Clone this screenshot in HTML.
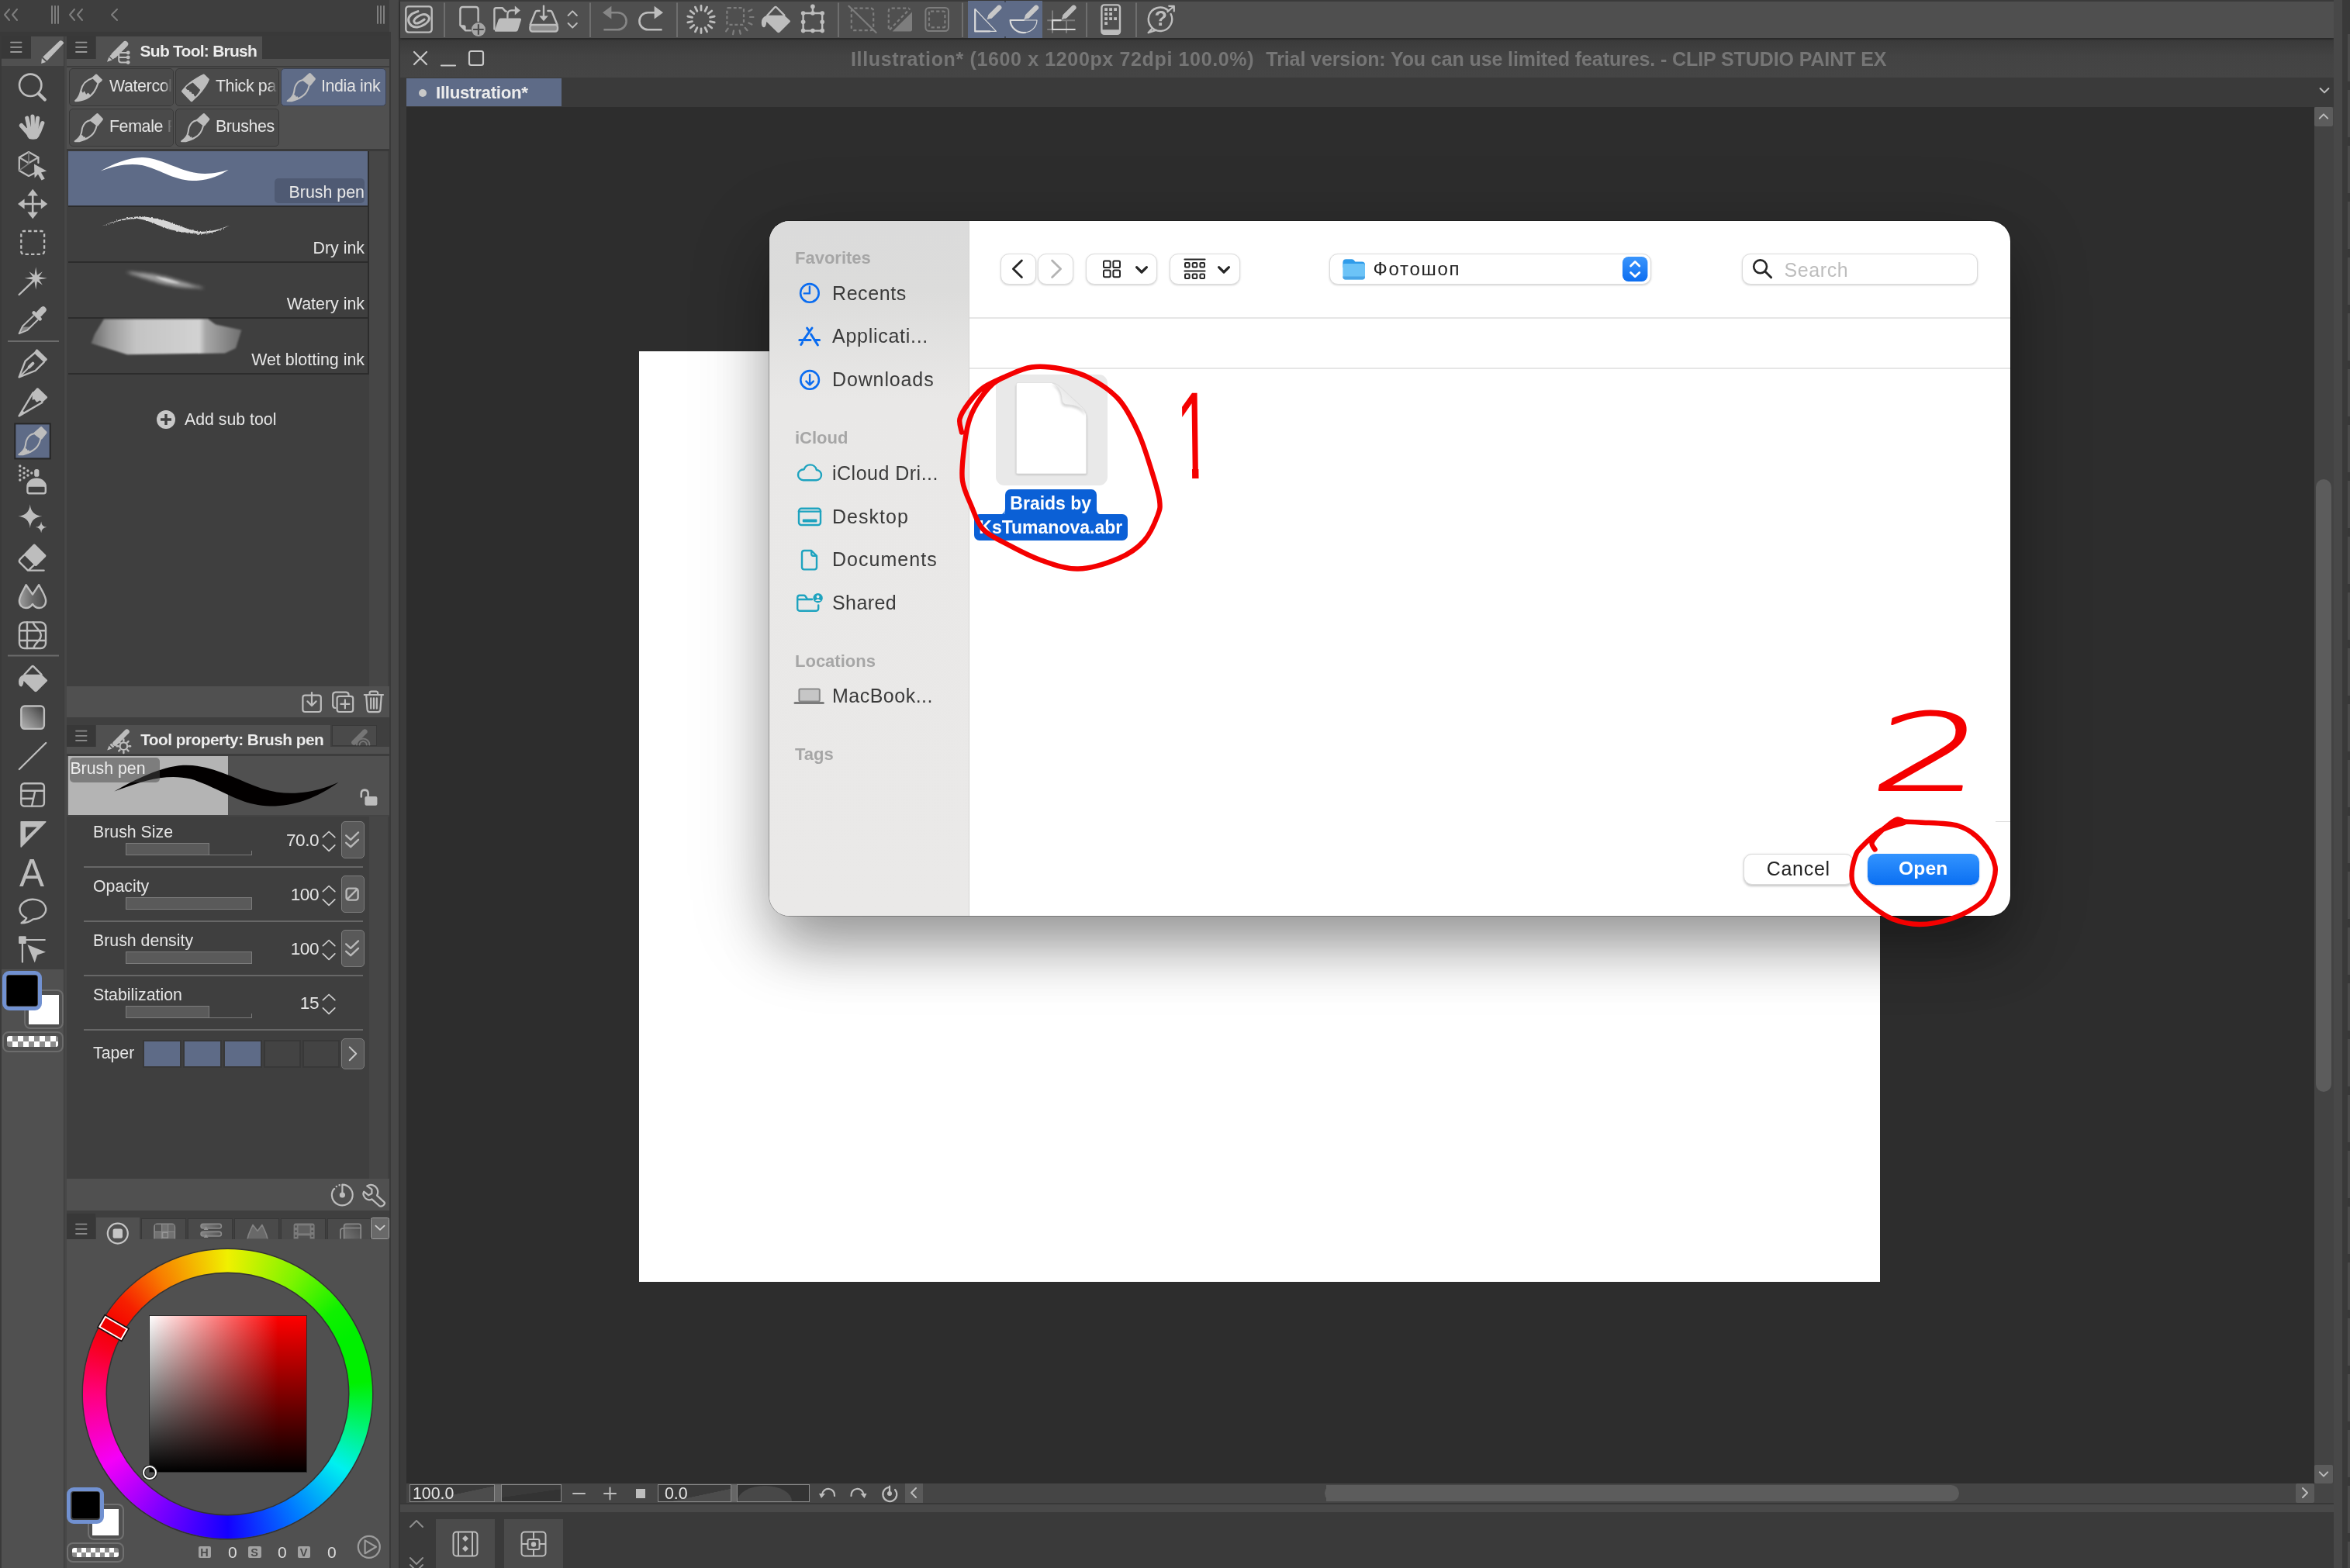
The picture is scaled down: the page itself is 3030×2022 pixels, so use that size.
<!DOCTYPE html>
<html lang="en"><head><meta charset="utf-8"><title>CLIP STUDIO PAINT - Open brush file</title>
<style>
*{box-sizing:border-box;margin:0;padding:0}
html,body{width:3030px;height:2022px;overflow:hidden}
body{position:relative;background:#474747;font-family:"Liberation Sans",sans-serif;color:#e2e2e2;-webkit-font-smoothing:antialiased}
.a{position:absolute}
.t{position:absolute;white-space:nowrap;line-height:1}
svg{position:absolute;overflow:visible}
.ic{fill:none;stroke:#bdbdbd;stroke-width:2.4;stroke-linecap:round;stroke-linejoin:round}
.icf{fill:#bdbdbd;stroke:none}
.dim{opacity:.42}
.lt{background:#505050}
.dk{background:#3f3f3f}
.sel{background:#5e6b87}
.gbtn{position:absolute;height:49px;background:#4a4a4a;border:1.6px solid #383838;border-radius:5px;overflow:hidden}
.gbtn.on{background:#5e6b87;border-color:#3b4254}
.gbtn .t{font-size:21.4px;letter-spacing:-.35px;color:#e4e4e4;left:50.9px;top:12.1px}
.gbtn i{position:absolute;right:0;top:0;width:13px;height:100%;background:linear-gradient(90deg,rgba(74,74,74,0),#4a4a4a 90%)}
.row{position:absolute;left:88px;width:386px;height:70px;background:#3f3f3f}
.row.sel{background:#5e6b87}
.rowsep{position:absolute;left:88px;width:388px;height:2px;background:#2c2c2c}
.rl{position:absolute;right:4px;bottom:6px;font-size:21.4px;color:#e8e8e8;white-space:nowrap;line-height:1}
.pl{position:absolute;left:120px;font-size:21.3px;color:#e6e6e6;white-space:nowrap;line-height:1}
.pv{position:absolute;font-size:22.6px;letter-spacing:-.5px;color:#e6e6e6;white-space:nowrap;line-height:1;text-align:right;width:80px;left:331px}
.sl{position:absolute;left:162px;width:163px;height:16px;border-bottom:1.5px solid #787878}
.sl:after{content:"";position:absolute;right:0;bottom:0;width:1.5px;height:5px;background:#787878}
.slf{position:absolute;left:0;top:0;height:16px;background:#5a5a5a;border:1.2px solid #7c7c7c;z-index:1}
.psep{position:absolute;left:108px;width:360px;height:2px;background:#676767}
.pbtn{position:absolute;left:440px;width:30px;background:#595959;border:1.3px solid #7c7c7c;border-radius:5px}
.sbi{position:absolute;left:1073px;font-size:25px;color:#3a3a3a;white-space:nowrap;line-height:1;letter-spacing:.6px}
.sbh{position:absolute;left:1025px;font-size:20.5px;font-weight:bold;color:#a6a6a6;white-space:nowrap;line-height:1}
.mbtn{position:absolute;background:#fff;border:1px solid #dcdcdc;border-radius:11px;box-shadow:0 1px 2.5px rgba(0,0,0,.18)}
#root{position:absolute;left:0;top:0;width:3030px;height:2022px;overflow:hidden;will-change:transform}
</style></head><body><div id="root">
<!-- ===== main window area ===== -->
<div class="a" style="left:502px;top:0;width:13px;height:2022px;background:#484848"></div>
<div class="a" style="left:502px;top:41px;width:2px;height:1981px;background:#3a3a3a"></div>
<div class="a" style="left:514px;top:0;width:2px;height:2022px;background:#363636"></div>
<div class="a" style="left:516px;top:0;width:2493px;height:2022px;background:#3b3b3b"></div>
<!-- command bar -->
<div class="a" style="left:516px;top:0;width:2493px;height:49px;background:#4f4f4f;border-top:2px solid #3a3a3a;box-shadow:0 2px 3px rgba(0,0,0,.35)"></div>
<!-- title row -->
<div class="a" style="left:516px;top:52px;width:2493px;height:48px;background:linear-gradient(#3a3a3a,#434343 40%,#454545)"></div>
<div class="t" style="left:1097px;top:64px;font-size:25px;font-weight:bold;color:#767676;letter-spacing:.64px">Illustration* (1600 x 1200px 72dpi 100.0%)&nbsp; <span style="letter-spacing:-.1px">Trial version: You can use limited features. - CLIP STUDIO PAINT EX</span></div>
<svg style="left:530px;top:62px" width="100" height="28" viewBox="0 0 100 28"><g class="ic" style="stroke:#c9c9c9;stroke-width:2.2"><path d="M4 5 L20 21 M20 5 L4 21"/><path d="M39 22.5 H57"/><rect x="75" y="4" width="18" height="18" rx="2.5"/></g></svg>
<!-- tab row -->
<div class="a" style="left:516px;top:100px;width:2493px;height:38px;background:#3a3a3a"></div>
<div class="a sel" style="left:524px;top:101px;width:200px;height:36px"></div>
<div class="a" style="left:540px;top:115px;width:10px;height:10px;border-radius:50%;background:#c8c8c8"></div>
<div class="t" style="left:562px;top:108.5px;font-size:22.3px;font-weight:bold;color:#ececec;letter-spacing:-.3px">Illustration*</div>
<svg style="left:2988px;top:111px" width="18" height="12" viewBox="0 0 18 12"><path class="ic" style="stroke-width:2" d="M3.6 3 L9 8.4 L14.4 3"/></svg>
<!-- canvas viewport -->
<div class="a" style="left:524px;top:138px;width:2460px;height:1775px;background:#2d2d2d"></div>
<div class="a" style="left:824px;top:453px;width:1600px;height:1200px;background:#fff"></div>
<!-- vertical scrollbar -->
<div class="a" style="left:2984px;top:138px;width:25px;height:1775px;background:#434343"></div>
<div class="a" style="left:2984px;top:138px;width:24px;height:25px;background:#5c5c5c;border-radius:2px"></div>
<svg style="left:2988px;top:144px" width="16" height="12" viewBox="0 0 16 12"><path class="ic" style="stroke-width:2" d="M2.8 8.6 L8 3.4 L13.2 8.6"/></svg>
<div class="a" style="left:2986px;top:618px;width:20px;height:790px;background:#5c5c5c;border-radius:10px"></div>
<div class="a" style="left:2984px;top:1889px;width:24px;height:24px;background:#5c5c5c;border-radius:2px"></div>
<svg style="left:2988px;top:1895px" width="16" height="12" viewBox="0 0 16 12"><path class="ic" style="stroke-width:2" d="M2.8 3.4 L8 8.6 L13.2 3.4"/></svg>
<!-- status / horizontal scrollbar -->
<div class="a" style="left:524px;top:1913px;width:2485px;height:25px;background:#454545"></div>
<div class="a" style="left:516px;top:1938px;width:2493px;height:12px;background:#494949;border-top:2px solid #383838"></div>
<div class="a" style="left:516px;top:1950px;width:2493px;height:72px;background:#3a3a3a"></div>
<div class="a" style="left:1190px;top:1915px;width:1336px;height:21px;background:#5c5c5c;border-radius:0 11px 11px 0"></div>
<div class="a" style="left:1190px;top:1913px;width:520px;height:25px;background:#454545"></div>
<div class="a" style="left:1708px;top:1915px;width:40px;height:21px;background:#5c5c5c;border-radius:11px 0 0 11px"></div>
<div class="a" style="left:2960px;top:1913px;width:24px;height:25px;background:#5a5a5a;border-radius:2px"></div>
<svg style="left:2966px;top:1917px" width="12" height="16" viewBox="0 0 12 16"><path class="ic" style="stroke-width:2" d="M3 2 L9 8 L3 14"/></svg>
<!-- zoom box -->
<div class="a" style="left:528px;top:1914px;width:110px;height:23px;border:1px solid #8a8a8a;background:linear-gradient(168deg,#3a3a3a 55%,#4c4c4c 56%)"></div>
<div class="t" style="left:532px;top:1915.5px;font-size:21.3px;color:#e6e6e6">100.0</div>
<div class="a" style="left:638px;top:1914px;width:8px;height:23px;background:#666"></div>
<div class="a" style="left:646px;top:1914px;width:78px;height:23px;border:1px solid #8a8a8a;background:linear-gradient(172deg,#3a3a3a 50%,#333 51%)"></div>
<svg style="left:738px;top:1914px" width="110" height="24" viewBox="0 0 110 24"><g class="ic" style="stroke-width:2"><path d="M1 12 H16"/><path d="M41 12 H56 M48.5 4.5 V19.5"/></g><rect class="icf" x="82" y="6" width="12" height="12"/></svg>
<div class="a" style="left:848px;top:1914px;width:95px;height:23px;border:1px solid #8a8a8a;background:linear-gradient(168deg,#3a3a3a 60%,#4c4c4c 61%)"></div>
<div class="t" style="left:857px;top:1915.5px;font-size:21.3px;color:#e6e6e6">0.0</div>
<div class="a" style="left:943px;top:1914px;width:7px;height:23px;background:#666"></div>
<div class="a" style="left:950px;top:1914px;width:94px;height:23px;border:1px solid #8a8a8a;background:#333;overflow:hidden"><div class="a" style="left:0;top:1px;width:70px;height:40px;border-radius:50%;background:#484848"></div></div>
<svg style="left:1055px;top:1913px" width="140" height="25" viewBox="0 0 140 25"><g class="ic" style="stroke-width:2.2"><path d="M5 14 A8 8 0 1 1 21 16"/><path d="M58.5 14 A8 8 0 1 0 42.5 16"/><path d="M92 5 A9 9 0 1 0 99 8"/><path d="M92 3.5 V11"/></g><path class="icf" d="M1 13 L9 13 L4 19z M62.5 13 L54.5 13 L59.5 19z"/><circle class="icf" cx="92" cy="13" r="3"/></svg>
<div class="a" style="left:1167px;top:1913px;width:23px;height:25px;background:#5a5a5a"></div>
<svg style="left:1172px;top:1917px" width="12" height="16" viewBox="0 0 12 16"><path class="ic" style="stroke-width:2" d="M9 2 L3 8 L9 14"/></svg>
<!-- timeline collapsed buttons -->
<svg style="left:528px;top:1960px" width="18" height="62" viewBox="0 0 18 62"><g class="ic" style="stroke:#8e8e8e;stroke-width:2"><path d="M1 9 L9 1 L17 9"/><path d="M1 49 L9 57 L17 49 M1 58 L9 66 L17 58"/></g></svg>
<div class="a" style="left:562px;top:1959px;width:76px;height:63px;background:#4b4b4b"></div>
<div class="a" style="left:650px;top:1959px;width:76px;height:63px;background:#4b4b4b"></div>
<svg style="left:583px;top:1974px" width="34" height="34" viewBox="0 0 34 34"><g class="ic" style="stroke-width:2"><rect x="1.5" y="1.5" width="31" height="31" rx="4"/><path d="M8 2 V32 M26 2 V32"/></g><path class="icf" d="M13 10 L17 6 L21 10 L17 14z M13 23 L17 19 L21 23 L17 27z"/></svg>
<svg style="left:671px;top:1974px" width="34" height="34" viewBox="0 0 34 34"><g class="ic" style="stroke-width:2"><rect x="1.5" y="1.5" width="31" height="31" rx="4"/><path d="M17 2 V9 M17 25 V32 M2 17 H9 M25 17 H32"/><rect x="9.5" y="11" width="15" height="13" rx="2"/></g><circle class="icf" cx="17" cy="17.5" r="3.2"/></svg>
<!-- right dock strip -->
<div class="a" style="left:3009px;top:0;width:11px;height:2022px;background:#484848"></div>
<div class="a" style="left:3020px;top:0;width:10px;height:2022px;background:#393939"></div>
<div class="a" style="left:3027px;top:44px;width:3px;height:1978px;background:repeating-linear-gradient(#4a4a4a 0 61px,#393939 61px 72px)"></div>
<!-- ===== left dock ===== -->
<div class="a" style="left:0;top:0;width:502px;height:2022px;background:#474747"></div>
<div class="a" style="left:0;top:0;width:502px;height:41px;background:#3e3e3e"></div>
<div class="a" style="left:0;top:41px;width:502px;height:6px;background:#393939"></div>
<svg style="left:0;top:0" width="502" height="40" viewBox="0 0 502 40"><g class="ic" style="stroke:#7e7e7e;stroke-width:2"><path d="M12 12 L6 19 L12 26 M22 12 L16 19 L22 26"/><path d="M67 8 V30 M71 8 V30 M75 8 V30"/><path d="M96 12 L90 19 L96 26 M106 12 L100 19 L106 26"/><path d="M151 12 L144 19 L151 26"/><path d="M487 8 V30 M491 8 V30 M495 8 V30"/></g></svg>
<!-- tool palette column -->
<div class="a" style="left:2px;top:47px;width:80px;height:1203px;background:#3f3f3f"></div>
<div class="a" style="left:2px;top:47px;width:38px;height:28px;background:#383838"></div>
<div class="a lt" style="left:40px;top:47px;width:42px;height:38px"></div>
<div class="a lt" style="left:2px;top:76px;width:80px;height:9px"></div>
<div class="a lt" style="left:2px;top:1250px;width:80px;height:772px"></div>
<div class="a" style="left:0;top:47px;width:2px;height:1975px;background:#3a3a3a"></div>
<div class="a" style="left:82px;top:47px;width:1px;height:1975px;background:#3c3c3c"></div>
<svg style="left:13px;top:53px" width="18" height="16" viewBox="0 0 18 16"><path class="ic" style="stroke:#9a9a9a;stroke-width:1.8" d="M1 1.6 H14.6 M1 7.8 H14.6 M1 14 H14.6"/></svg>
<!-- sub tool panel -->
<div class="a dk" style="left:86px;top:47px;width:416px;height:1975px"></div>
<div class="a" style="left:86px;top:47px;width:37px;height:29px;background:#383838"></div>
<div class="a lt" style="left:124px;top:47px;width:214px;height:30px"></div>
<div class="a" style="left:338px;top:47px;width:164px;height:29px;background:#3a3a3a"></div>
<div class="a lt" style="left:86px;top:76px;width:416px;height:118px"></div>
<svg style="left:97px;top:53px" width="18" height="16" viewBox="0 0 18 16"><path class="ic" style="stroke:#9a9a9a;stroke-width:1.8" d="M1 1.6 H14.6 M1 7.8 H14.6 M1 14 H14.6"/></svg>
<div class="t" style="left:180.6px;top:55.4px;font-size:21px;font-weight:bold;color:#ececec;letter-spacing:-.75px">Sub Tool: Brush</div>
<div class="a" style="left:86px;top:85px;width:416px;height:2.4px;background:#3d3d3d"></div>
<!-- group buttons -->
<div class="gbtn" style="left:89px;top:88px;width:135px"><div class="t">Watercol</div><i></i></div>
<div class="gbtn" style="left:226px;top:88px;width:134px"><div class="t">Thick pa</div><i></i></div>
<div class="gbtn on" style="left:362px;top:88px;width:136px"><div class="t">India ink</div></div>
<div class="gbtn" style="left:89px;top:140px;width:135px"><div class="t">Female P</div><i></i></div>
<div class="gbtn" style="left:226px;top:140px;width:134px"><div class="t">Brushes</div></div>
<div class="a" style="left:86px;top:192px;width:416px;height:3px;background:#393939"></div>
<!-- sub tool list -->
<div class="a" style="left:476px;top:195px;width:24px;height:690px;background:#464646"></div>
<div class="a" style="left:474px;top:195px;width:2px;height:288px;background:#2c2c2c"></div>
<div class="row sel" style="top:195px"><div class="a" style="right:4px;bottom:3px;width:116px;height:32px;border-radius:5px;background:#4f5a73"></div><div class="rl">Brush pen</div></div>
<div class="rowsep" style="top:265px"></div>
<div class="row" style="top:267px"><div class="rl">Dry ink</div></div>
<div class="rowsep" style="top:337px"></div>
<div class="row" style="top:339px"><div class="rl">Watery ink</div></div>
<div class="rowsep" style="top:409px"></div>
<div class="row" style="top:411px"><div class="rl">Wet blotting ink</div></div>
<div class="rowsep" style="top:481px"></div>
<div class="t" style="left:238px;top:531px;font-size:21.3px;color:#e6e6e6">Add sub tool</div>
<svg style="left:201px;top:528px" width="26" height="26" viewBox="0 0 26 26"><circle cx="13" cy="13" r="12" fill="#c8c8c8"/><path d="M13 6 V20 M6 13 H20" stroke="#3f3f3f" stroke-width="3.4"/></svg>
<!-- sub tool footer -->
<div class="a lt" style="left:86px;top:885px;width:416px;height:40px"></div>
<!-- tool property -->
<div class="a" style="left:86px;top:935px;width:37px;height:28px;background:#383838"></div>
<div class="a lt" style="left:124px;top:935px;width:302px;height:30px"></div>
<div class="a" style="left:428px;top:935px;width:58px;height:27px;background:#4a4a4a;border:1.5px solid #383838"></div>
<div class="a lt" style="left:86px;top:963px;width:416px;height:89px"></div>
<svg style="left:97px;top:941px" width="18" height="16" viewBox="0 0 18 16"><path class="ic" style="stroke:#8a8a8a;stroke-width:1.8" d="M1 1.6 H14.6 M1 7.8 H14.6 M1 14 H14.6"/></svg>
<div class="t" style="left:181.2px;top:943.6px;font-size:20.8px;font-weight:bold;color:#ececec;letter-spacing:-.5px">Tool property: Brush pen</div>
<div class="a" style="left:86px;top:972.4px;width:416px;height:2.4px;background:#3d3d3d"></div>
<div class="a" style="left:88px;top:975px;width:206px;height:76px;background:#b4b4b4"></div>
<div class="a" style="left:86px;top:1051px;width:416px;height:2px;background:#444"></div>
<div class="a" style="left:476px;top:1053px;width:24px;height:467px;background:#464646"></div>
<!-- property rows -->
<div class="pl" style="top:1063px">Brush Size</div>
<div class="pv" style="top:1072.5px">70.0</div>
<div class="sl" style="top:1087px"><div class="slf" style="width:108px"></div></div>
<div class="pbtn" style="top:1059px;height:48px"></div>
<div class="psep" style="top:1117px"></div>
<div class="pl" style="top:1133px">Opacity</div>
<div class="pv" style="top:1142.5px">100</div>
<div class="sl" style="top:1157px"><div class="slf" style="width:163px"></div></div>
<div class="pbtn" style="top:1129px;height:48px"></div>
<div class="psep" style="top:1187px"></div>
<div class="pl" style="top:1203px">Brush density</div>
<div class="pv" style="top:1212.5px">100</div>
<div class="sl" style="top:1227px"><div class="slf" style="width:163px"></div></div>
<div class="pbtn" style="top:1199px;height:48px"></div>
<div class="psep" style="top:1257px"></div>
<div class="pl" style="top:1273px">Stabilization</div>
<div class="pv" style="top:1282.5px">15</div>
<div class="sl" style="top:1297px"><div class="slf" style="width:108px"></div></div>
<div class="psep" style="top:1327px"></div>
<div class="pl" style="top:1348px">Taper</div>
<div class="a" style="left:184px;top:1341px;width:50px;height:36px;background:#5e6b87;border:2px solid #383838"></div>
<div class="a" style="left:236px;top:1341px;width:50px;height:36px;background:#5e6b87;border:2px solid #383838"></div>
<div class="a" style="left:288px;top:1341px;width:50px;height:36px;background:#5e6b87;border:2px solid #383838"></div>
<div class="a" style="left:340px;top:1341px;width:48px;height:36px;background:#434343;border:2px solid #383838"></div>
<div class="a" style="left:390px;top:1341px;width:48px;height:36px;background:#434343;border:2px solid #383838"></div>
<div class="pbtn" style="top:1339px;height:40px"></div>
<!-- property footer -->
<div class="a lt" style="left:86px;top:1520px;width:416px;height:41px"></div>
<!-- color panel -->
<div class="a" style="left:86px;top:1565px;width:37px;height:33px;background:#383838"></div>
<div class="a lt" style="left:86px;top:1598px;width:416px;height:424px"></div>
<div class="a lt" style="left:124px;top:1570px;width:56px;height:30px"></div>
<svg style="left:97px;top:1577px" width="18" height="16" viewBox="0 0 18 16"><path class="ic" style="stroke:#8a8a8a;stroke-width:1.8" d="M1 1.6 H14.6 M1 7.8 H14.6 M1 14 H14.6"/></svg>
<!-- ===== tool palette icons ===== -->
<svg style="left:0;top:0" width="86" height="1260" viewBox="0 0 86 1260">
<defs>
<symbol id="brush" viewBox="0 0 37 37" overflow="visible">
 <path class="icf" d="M27.6 0.3 Q28.6 -0.4 29.6 0.5 L36 7 Q36.8 8 36 9 L31 13.3 L22.4 5 Z"/>
 <path class="ic" style="stroke-width:2.2" d="M23 5.6 C14.5 8 9.5 15 8 22.5 C6.6 29 3.6 33 0.8 35.6 C11 35.4 20 31.5 25.5 23.5 C28 19.8 29.6 16 30.6 12.8"/>
 <path class="icf" d="M8.3 21 L10.8 25 L12.6 22.4 L15.2 27 L17.6 24.6 L21.5 28.6 C16 33 8.5 35.6 0.8 35.6 C4.6 32 7 27 8.3 21Z"/>
</symbol>
<linearGradient id="gblend" x1="0" x2="1" y1="0" y2="0"><stop offset="0" stop-color="#9e9e9e"/><stop offset=".5" stop-color="#6a6a6a"/><stop offset="1" stop-color="#4a4a4a"/></linearGradient>
<linearGradient id="ggrad" x1="0" x2="1" y1="1" y2="0"><stop offset="0" stop-color="#b4b4b4"/><stop offset=".55" stop-color="#767676"/><stop offset="1" stop-color="#3a3a3a"/></linearGradient>
<symbol id="bucket" viewBox="0 0 38 36" overflow="visible">
 <path class="icf" d="M7.2 12.1 L29.7 12.1 L37 19 Q37.8 19.9 36.9 20.9 L23.9 33.9 Q22.2 35.2 20.5 33.9 L6.7 20.4 Q6.3 26.5 3.7 27.7 Q0.2 27.4 0.2 21.3 Q0.4 14.3 7.2 12.1 Z"/>
 <path class="ic" d="M7.7 12.1 L17.2 1.9 Q18.4 0.7 19.6 1.9 L29.7 12.1"/>
</symbol>
</defs>
<!-- pencil tab icon -->
<path class="icf" d="M76 53.4 Q78.8 51 81.2 53.8 L82.4 55.4 L60.6 78.6 L55.2 73.6 Z M53.9 75 L59.2 80 L53.2 82 Z"/>
<!-- magnifier -->
<circle class="ic" style="stroke-width:2.6" cx="39.2" cy="109.8" r="14.2"/><path class="ic" style="stroke-width:4.2" d="M49.6 120.6 L57.8 128.6"/>
<!-- hand -->
<g class="ic" style="stroke-width:5.2"><path d="M34.8 152.2 L38 167"/><path d="M42 150.2 L42.6 166"/><path d="M48.6 152.4 L46.8 167"/><path d="M54.8 158.6 L50.4 170"/><path d="M27.6 161.8 L36 171.4" style="stroke-width:5.6"/></g>
<path class="icf" d="M33.4 165 L52.6 166 C53 172 50 177 47.6 179 Q42.5 180.4 37.6 179 C34.6 176 33 171 33.4 165Z"/>
<!-- 3D operation -->
<g class="ic" style="stroke-width:2.2"><path d="M46 222.5 L37 227 L24.8 220 V203 L37 196 L49.4 203 V210"/><path d="M24.8 203 L37 210.2 L49.4 203" style="opacity:.9"/><path d="M37 196.5 V211 M37 211 L25 219.6" style="stroke:#7e7e7e;stroke-width:1.6"/></g>
<path class="icf" d="M44 211.6 L60.2 220.4 L53 222.4 L57.8 230.4 L53.6 232.6 L49 224.8 L44.6 229.6 Z"/>
<!-- move -->
<path class="ic" style="stroke-width:2.6" d="M42.2 251 V275 M30 263 H54"/>
<path class="icf" d="M42.2 243.8 L49 252.6 H35.4Z M42.2 282.2 L49 273.4 H35.4Z M23 263 L31.6 256.4 V269.6Z M61.2 263 L52.8 256.4 V269.6Z"/>
<!-- marquee -->
<rect class="ic" style="stroke-width:2.3;stroke-dasharray:4.4 3.1;stroke-dashoffset:2.2;stroke-linecap:butt" x="27.3" y="298" width="29.8" height="29.8" rx="3.6"/>
<!-- wand -->
<path class="icf" d="M46.2,344.2 L47.9,354.7 L54.8,350.2 L50.3,357.1 L60.8,358.8 L50.3,360.5 L54.8,367.4 L47.9,362.9 L46.2,373.4 L44.5,362.9 L37.6,367.4 L42.1,360.5 L31.6,358.8 L42.1,357.1 L37.6,350.2 L44.5,354.7Z"/>
<path class="ic" style="stroke-width:2.4" d="M43 362.4 L24.6 380"/>
<!-- eyedropper -->
<path class="ic" style="stroke-width:8.2" d="M55.6 399.4 L50.6 404.6"/><path class="ic" style="stroke-width:4.6" d="M43.6 403.4 L51.6 411.4"/>
<path class="ic" style="stroke-width:2" d="M43 407.4 L29 420.8 L24.6 430.2 L35.2 425.8 L48.4 412.8"/><path class="icf" style="opacity:.55" d="M29.4 421.4 H38.6 L35 425.4 L25.4 429.6Z"/>
<path d="M10 440 H76" stroke="#6c6c6c" stroke-width="2"/>
<!-- pen -->
<path class="icf" d="M46.6 450.8 Q47.6 449.8 48.6 450.8 L60.6 462.6 Q61.4 463.6 60.4 464.6 L57 467.6 L43.6 455 Z"/>
<path class="ic" style="stroke-width:2.4" d="M44.2 455.6 L32.6 465.6 L24.6 486.4 L45.6 478 L56.6 467.2"/><path class="ic" style="stroke-width:2" d="M25 486 L41.5 469.6"/><path class="ic" style="stroke-width:4" d="M37.6 473.4 L42.4 468.6"/>
<!-- pencil -->
<path class="icf" d="M47.4 500.6 Q48.4 499.8 49.4 500.6 L60.8 511.4 Q61.6 512.4 60.6 513.4 L54 519.6 Q52.5 514.5 49.5 517.5 Q47 520 45.6 516.4 Q44.8 513.6 41.8 516 Q41.2 511 42.4 506 Z"/>
<path class="ic" style="stroke-width:2.4" d="M42.6 506.4 L24.6 536.4 L54.4 519"/><path class="icf" d="M24.4 536.8 L28.6 529 L32.4 532.4Z"/>
<!-- brush (selected) -->
<rect x="19.3" y="546.4" width="45.4" height="45" fill="#5e6b87" stroke="#262626" stroke-width="2"/>
<use href="#ibrush" x="24" y="550" width="37" height="37"/>
<!-- airbrush -->
<g class="icf"><circle cx="25.8" cy="601" r="1.7"/><circle cx="31" cy="603.8" r="1.7"/><circle cx="25.8" cy="607" r="1.7"/><circle cx="31" cy="610" r="1.7"/><circle cx="35.9" cy="607" r="1.7"/><circle cx="25.8" cy="613" r="1.7"/><circle cx="31" cy="616" r="1.7"/><circle cx="35.9" cy="613" r="1.7"/><circle cx="40.8" cy="610" r="1.7"/><circle cx="25.8" cy="619" r="1.7"/>
<rect x="44.2" y="605" width="6.2" height="9.8" rx="2.6"/><path d="M34.2 627.4 A12.9 10.8 0 0 1 60 627.4 Z"/></g>
<rect class="ic" style="stroke-width:2.4" x="35.4" y="626.4" width="23.4" height="9.8" rx="2.4"/>
<!-- decoration -->
<path class="icf" d="M38.8 650.2 Q39.9 664.6 54.4 665.7 Q39.9 666.8 38.8 681.2 Q37.7 666.8 23.4 665.7 Q37.7 664.6 38.8 650.2Z M53.1 672.4 Q53.7 679.2 60.4 679.8 Q53.7 680.4 53.1 687.2 Q52.5 680.4 45.8 679.8 Q52.5 679.2 53.1 672.4Z"/>
<!-- eraser -->
<path class="icf" d="M43 702 Q44.2 700.9 45.4 702 L59 715.6 Q60 716.8 59 718 L47.4 729.6 Q46.2 730.6 45 729.6 L31.2 715.8 Q30.6 714.8 31.6 713.8 Z"/>
<path class="ic" style="stroke-width:2.4" d="M31 716 L25.6 721.4 Q24 723.4 25.6 725.4 L36 735.6 H56.6 M36.6 735.6 L45.6 727"/>
<!-- blend -->
<path class="ic" style="fill:url(#gblend);stroke-width:2.4" d="M33.6 754.2 C30 762 24.9 768.5 24.9 775 C24.9 781 29 784 33.5 784 C37 784 40 782 42 779 C44 782 47 784 50.5 784 C55 784 59.1 781 59.1 775 C59.1 768.5 54 762 50.2 754.2 L42 766.5 Z"/>
<!-- liquify mesh -->
<g class="ic" style="stroke-width:2.4"><rect x="25" y="802.4" width="34" height="33.6" rx="6.6"/><path d="M35 802.4 V836 M25 813.2 H59 M25 826 H59"/><path d="M42.6 802.6 C45 810 53 812 52.8 819.4 C52.6 827 45 828 43.4 835.8"/></g>
<path d="M10 845.6 H76" stroke="#6c6c6c" stroke-width="2"/>
<!-- fill -->
<use href="#bucket" x="23.8" y="857.7" width="38" height="36"/>
<!-- gradient -->
<rect class="ic" style="fill:url(#ggrad);stroke-width:2.4" x="27.3" y="910.5" width="29.6" height="29.4" rx="4.6"/>
<!-- figure (line) -->
<path class="ic" style="stroke-width:2.3" d="M24.8 992 L59.2 958"/>
<!-- frame border -->
<g class="ic" style="stroke-width:2.4"><rect x="27.3" y="1010.2" width="29.6" height="29.4" rx="4.2"/><path d="M27.3 1019.8 H56.9 M27.3 1029.8 H42.6 M45.2 1020 L41 1039.4"/></g>
<!-- ruler -->
<path class="icf" style="stroke:#bdbdbd;stroke-width:1.6;stroke-linejoin:round" fill-rule="evenodd" d="M27.2 1059.8 L58.8 1059.8 L27.2 1092 Z M32.2 1065.8 V1082.6 L49.4 1065.8Z"/>
<!-- balloon -->
<path class="ic" style="stroke-width:2.4" d="M34.2 1183.8 A16.8 12.8 0 1 1 42.6 1185.4 Q36 1190 27.6 1190.4 Q32.6 1187.6 34.2 1183.8Z"/>
<!-- correct line -->
<rect class="icf" x="24.1" y="1207.3" width="9.6" height="9.6" rx="1"/><path class="ic" style="stroke-width:2.2" d="M33 1212 H57.8 M28.9 1216 V1240.6"/>
<path class="icf" d="M35.4 1218.2 L59 1227.8 L48 1231.6 L44.8 1241.6Z"/>
</svg>
<div class="t" style="left:25.2px;top:1100.5px;font-size:50.5px;color:#bdbdbd;transform:scaleX(.95);transform-origin:0 0">A</div>
<!-- main colour swatches -->
<div class="a" style="left:31px;top:1276px;width:51px;height:51px;border:2px solid #6c6c6c;border-radius:8px"></div>
<div class="a" style="left:37px;top:1283px;width:39px;height:38px;background:#fff"></div>
<div class="a" style="left:3px;top:1252px;width:51px;height:51px;border:5px solid #7191d1;border-radius:9px;background:#3a3a3a"></div>
<div class="a" style="left:9px;top:1258px;width:39px;height:39px;background:#000;border-radius:2px"></div>
<div class="a" style="left:3px;top:1330px;width:79px;height:27px;border:2px solid #6c6c6c;border-radius:8px"></div>
<div class="a" style="left:9px;top:1336px;width:66px;height:14px;border-radius:3px;background:#fff conic-gradient(#8c8c8c 25%,#fff 0 50%,#8c8c8c 0 75%,#fff 0) 0 0/14px 14px"></div>
<!-- ===== command bar icons ===== -->
<div class="a sel" style="left:1248px;top:1px;width:96px;height:48px"></div>
<div class="a" style="left:1295px;top:1px;width:2px;height:2px;background:#3f4656"></div><div class="a" style="left:1295px;top:47px;width:2px;height:2px;background:#3f4656"></div>
<svg style="left:516px;top:0" width="1010" height="50" viewBox="516 0 1010 50">
<g stroke="#6e6e6e" stroke-width="2"><path d="M573 3.5 V48 M761 3.5 V48 M873 3.5 V48 M1081 3.5 V48 M1241 3.5 V48 M1401 3.5 V48 M1465 3.5 V48"/></g>
<!-- clip studio -->
<rect class="ic" style="stroke-width:2.4" x="523.3" y="8.4" width="33.4" height="33.2" rx="3.6"/>
<path class="ic" style="stroke-width:3" d="M539.0 14.6 C537.6 15.2 532.6 16.7 530.5 18.5 C528.4 20.3 526.6 23.1 526.6 25.5 C526.6 27.9 528.6 31.4 530.5 33.0 C532.4 34.6 535.2 35.2 538.0 35.0 C540.8 34.8 544.9 33.2 547.5 31.5 C550.1 29.8 552.9 26.5 553.4 24.5 C553.9 22.5 551.9 20.5 550.5 19.5 C549.1 18.5 547.1 18.2 545.0 18.6 C542.9 19.0 539.9 20.5 538.0 21.8 C536.1 23.1 534.1 25.1 533.8 26.5 C533.5 27.9 534.8 29.6 536.0 30.0 C537.2 30.4 539.1 29.8 541.0 29.0 C542.9 28.2 546.2 25.7 547.2 25.0"/>
<!-- new -->
<path class="ic" style="stroke-width:2.4" d="M606.6 39.4 H600.2 L593.4 32.6 V12.4 Q593.4 9 596.8 9 H613.2 Q616.6 9 616.6 12.4 V27"/><path class="icf" d="M593.6 32.2 H598.4 Q600.6 32.4 600.6 34.6 V39.4Z"/>
<circle cx="616.9" cy="38" r="9" fill="#a6a6a6"/><path d="M616.9 31.2 V44.8 M610.1 38 H623.7" stroke="#4c4c4c" stroke-width="2.2"/>
<!-- open -->
<path class="ic" style="stroke-width:2.4" d="M637.4 37.6 V12.6 Q637.4 10.2 639.8 10.2 H647.6 L651.8 14.6 H653"/>
<path class="icf" d="M645.2 23.4 H670.6 Q672.6 23.6 672 25.6 L668 38.6 Q667.2 40.8 665 40.8 H639 Q637.4 40.6 638 38.8 L642.6 25.4 Q643.4 23.4 645.2 23.4Z"/>
<path class="ic" style="stroke-width:2.4" d="M654.4 22.8 V18.6 Q654.6 13.6 659.6 13.4 H664"/><path class="icf" d="M663.8 7.4 L670.8 13.4 L663.8 19.6Z"/>
<!-- save -->
<path class="ic" style="stroke-width:2.4" d="M695.6 14 H692.4 Q690.6 14.2 690 16 L683.6 32 M706.4 14 H709.6 Q711.4 14.2 712 16 L718.6 32"/>
<rect class="ic" style="stroke-width:2.4;fill:#8e8e8e" x="683.4" y="32" width="35.6" height="8.6" rx="3"/>
<path class="ic" style="stroke-width:2.4" d="M701 7.6 V22"/><path class="icf" d="M695.2 20.6 H706.8 L701 27.2Z"/>
<path class="ic" style="stroke-width:2" d="M732.6 20 L738.2 14.4 L743.8 20 M732.6 30 L738.2 35.6 L743.8 30"/>
<!-- undo (disabled) / redo -->
<g style="opacity:.5"><path class="icf" d="M777 16.2 L788.4 7.8 V24.6Z"/><path class="ic" style="stroke-width:2.6;stroke-linecap:butt" d="M788 16.2 H796.6 A11 11 0 0 1 796.6 38.2 H778.4"/></g>
<path class="icf" d="M855 16.2 L843.6 7.8 V24.6Z"/><path class="ic" style="stroke-width:2.6;stroke-linecap:butt" d="M844 16.2 H835.4 A11 11 0 0 0 835.4 38.2 H853.6"/>
<!-- clear -->
<path class="ic" style="stroke-width:2.8" d="M915.5,27.6L921.2,28.9M913.2,32.4L917.8,36.0M909.1,35.6L911.6,40.9M904.0,36.8L904.0,42.6M898.9,35.6L896.4,40.9M894.8,32.4L890.2,36.0M892.5,27.6L886.8,28.9M892.5,22.4L886.8,21.1M894.8,17.6L890.2,14.0M898.9,14.4L896.4,9.1M904.0,13.2L904.0,7.4M909.1,14.4L911.6,9.1M913.2,17.6L917.8,14.0M915.5,22.4L921.2,21.1"/>
<!-- clear outside (disabled) -->
<g style="opacity:.42"><rect class="ic" style="stroke-width:2.2;stroke-dasharray:4 2.8;stroke-linecap:butt" x="937.4" y="10.2" width="21.6" height="21.6" rx="1.5"/><path class="ic" style="stroke-width:2.2" d="M965.3,14.4L969.4,12.5M967.0,22.0L971.5,22.0M965.3,29.6L969.4,31.5M960.6,35.8L963.5,39.2M953.7,39.4L954.8,43.7M945.9,39.7L945.1,44.2M938.7,36.7L936.1,40.4"/></g>
<!-- fill -->
<use href="#bucket" x="981.6" y="7.6" width="38" height="36"/>
<!-- scale/rotate -->
<path class="ic" style="stroke-width:2.4" d="M1035.6 17 H1060.2 V39.6 H1035.6Z M1047.9 17 V9"/>
<g class="icf"><circle cx="1035.6" cy="17" r="2.8"/><circle cx="1047.9" cy="17" r="2.8"/><circle cx="1060.2" cy="17" r="2.8"/><circle cx="1035.6" cy="28.3" r="2.8"/><circle cx="1060.2" cy="28.3" r="2.8"/><circle cx="1035.6" cy="39.6" r="2.8"/><circle cx="1047.9" cy="39.6" r="2.8"/><circle cx="1060.2" cy="39.6" r="2.8"/><circle cx="1047.9" cy="8.4" r="2.8"/></g>
<!-- deselect / invert / border (disabled) -->
<g style="opacity:.42">
<rect class="ic" style="stroke-width:2.2;stroke-dasharray:4.2 3;stroke-linecap:butt" x="1097.8" y="10.6" width="28.4" height="28.6" rx="3.5"/><path class="ic" style="stroke-width:2.2" d="M1094.4 7.8 L1129.6 42"/>
<path class="ic" style="stroke-width:2.2;stroke-dasharray:4.2 3;stroke-linecap:butt" d="M1145.8 37 V14 Q1145.8 10.6 1149.2 10.6 H1172 M1147 38.4 L1173.4 11"/><path class="icf" d="M1176 15.6 V38.4 Q1175.8 40.2 1174 40.4 H1150.6Z"/>
<rect class="ic" style="stroke-width:2" x="1193.4" y="10" width="29.6" height="30" rx="4.4"/><rect class="ic" style="stroke-width:2.2;stroke-dasharray:4.2 3;stroke-linecap:butt" x="1198" y="14.6" width="20.4" height="20.8" rx="2"/>
</g>
<!-- snap to ruler -->
<g style="stroke:#dadada"><path class="ic" style="stroke:inherit;stroke-width:2.2" d="M1257.2 12 V40.4 H1276"/><path class="ic" style="stroke:inherit;stroke-width:1.2" d="M1257.6 12 L1284.4 40.4 H1276"/><path class="ic" style="stroke:#c8c8c8;stroke-width:6.4" d="M1288.2 9.8 L1277.4 20.6"/><path d="M1274.6 18.8 L1279 23.2 L1272.4 25.2Z" fill="#c8c8c8" stroke="none"/></g>
<!-- snap to special ruler -->
<g style="stroke:#dadada"><path class="ic" style="stroke:inherit;stroke-width:2.2" d="M1322 42 A17.2 16.4 0 0 1 1302.6 26 H1320"/><path class="ic" style="stroke:inherit;stroke-width:1.2" d="M1320 26 H1337 A17.2 16.4 0 0 1 1322 42"/><path class="ic" style="stroke:#c8c8c8;stroke-width:6.4" d="M1336 9.8 L1325.2 20.6"/><path d="M1322.4 18.8 L1326.8 23.2 L1320.2 25.2Z" fill="#c8c8c8" stroke="none"/></g>
<!-- snap to grid -->
<path class="ic" style="stroke:#7c7c7c;stroke-width:2;stroke-linecap:butt" d="M1350.2 26.2 H1386 M1350.2 38 H1386 M1357 13.4 V42.8 M1375 26 V42.8"/>
<path class="ic" style="stroke:#d4d4d4;stroke-width:2.2" d="M1367.6 26.2 H1357 V38 H1385.8"/><path class="ic" style="stroke-width:6.4" d="M1384.4 9.8 L1373.6 20.6"/><path class="icf" d="M1370.8 18.8 L1375.2 23.2 L1368.6 25.2Z"/>
<!-- tablet -->
<rect class="ic" style="stroke-width:2.4" x="1420.4" y="6.4" width="23.6" height="37.4" rx="3.4"/><path class="icf" d="M1420.4 38.2 H1444 V41 Q1443.8 43.6 1441 43.8 H1423.4 Q1420.6 43.6 1420.4 41Z"/>
<g class="icf"><rect x="1424.2" y="10.2" width="3.8" height="3.8"/><rect x="1430.2" y="10.2" width="3.8" height="3.8"/><rect x="1436.2" y="10.2" width="3.8" height="3.8"/><rect x="1424.2" y="16.2" width="3.8" height="3.8"/><rect x="1430.2" y="16.2" width="3.8" height="3.8"/><rect x="1424.2" y="22.2" width="3.8" height="3.8"/><rect x="1430.2" y="22.2" width="3.8" height="3.8"/><rect x="1436.2" y="22.2" width="3.8" height="3.8"/><rect x="1424.2" y="28.2" width="3.8" height="3.8"/></g>
<!-- help -->
<path class="ic" style="stroke-width:2.4" d="M1505.6 13 A15.2 15.2 0 1 0 1509.6 18 M1486 36.2 L1480.6 42.2 L1490.6 38.8"/>
<path class="ic" style="stroke-width:2.2" d="M1505.4 15.2 L1513.6 8 M1507.2 7.8 H1513.8 V14.4"/>
</svg>
<div class="t" style="left:1488.5px;top:10.5px;font-size:27px;font-weight:bold;color:#bdbdbd">?</div>
<!-- ===== sub tool / property panel icons & strokes ===== -->
<svg style="left:86px;top:40px" width="420" height="1560" viewBox="86 40 420 1560">
<defs>
<symbol id="ibrush" viewBox="0 0 37 37" overflow="visible">
 <path class="icf" d="M28 0.6 Q29.2 -0.4 30.4 0.7 L36 6.4 Q37 7.5 36.2 8.7 L30.4 15.9 Q29.4 17 28.1 16.2 L20 10 Q18.8 9 19.8 7.8 Z"/>
 <path class="ic" style="stroke-width:2" d="M20.4 9 C18.7 9.4 15.5 10.4 13.9 11.9 C12.3 13.4 10.9 15.8 10.1 17.9 C9.2 20.0 9.2 22.6 8.8 24.3 C8.4 26.1 8.1 27.2 7.5 28.4 C6.9 29.6 6.5 30.3 5.3 31.6 C4.1 32.9 1.1 35.4 0.2 36.2 C1.2 36.2 3.9 36.5 5.9 36.2 C7.9 35.9 10.2 35.1 12.3 34.2 C14.4 33.3 16.8 32.0 18.7 30.7 C20.6 29.4 22.2 28.1 23.5 26.5 C24.8 24.9 25.9 22.8 26.7 21.1 C27.5 19.4 27.9 17.0 28.4 15.6"/>
 <path class="icf" d="M7.9 27.4 L10.6 29 L11.4 30.7 L13.3 30.3 L13.9 31.9 L15.8 31.6 L17.4 32.4 C12.4 35 6 36.6 0.2 36.2 C4 33.6 6.6 31 7.9 27.4Z"/>
</symbol>
<symbol id="flatbrush" viewBox="0 0 37 37" overflow="visible">
 <path class="icf" fill-rule="evenodd" d="M28 0.6 Q29 -0.2 30 0.7 L35.6 6.2 Q36.4 7.1 35.8 8.2 C33 15 26 25 18.6 31.4 L14.4 35.6 Q13.2 36.6 12 35.5 L0.6 23.6 Q-0.2 22.5 0.7 21.4 L5 16.4 C9 12 17 6 28 0.6Z M14.8 11.3 L24.4 20.8 C22.6 24 20.4 27 18 29.5 L16.5 28 L16 26 L13.5 25.5 L13 23.5 L10.5 23 L10 21 L7.5 20.5 L5.5 18 C8 15.4 11 13 14.8 11.3Z"/>
</symbol>
<filter id="blur2" x="-20%" y="-50%" width="140%" height="200%"><feGaussianBlur stdDeviation="2.2"/></filter>
<filter id="blur1" x="-10%" y="-20%" width="120%" height="140%"><feGaussianBlur stdDeviation="1.1"/></filter>
<filter id="rough" x="-5%" y="-30%" width="110%" height="160%"><feTurbulence type="fractalNoise" baseFrequency=".5" numOctaves="2" seed="3" result="n"/><feDisplacementMap in="SourceGraphic" in2="n" scale="3.2"/></filter>
<linearGradient id="wetg" x1="0" x2="1" y1="0" y2="0"><stop offset="0" stop-color="#6a6a6a"/><stop offset=".12" stop-color="#9a9a9a"/><stop offset=".3" stop-color="#c4c4c4"/><stop offset=".72" stop-color="#d2d2d2"/><stop offset=".76" stop-color="#a8a8a8"/><stop offset="1" stop-color="#6e6e6e"/></linearGradient>
</defs>
<!-- sub tool header icon -->
<path class="ic" style="stroke-width:7.6" d="M161.4 56.8 L147.2 71.2" /><path class="icf" d="M138 79.8 L140.4 73.6 L144.6 77.6Z M141.2 72.6 L145.6 76.8 L147.6 74.8 L143.2 70.6Z"/>
<path class="ic" style="stroke-width:2" d="M153.2 68 V77.6 Q153.4 80.4 156.2 80.5 H164 M153.2 68 H164 M153.2 74 H164"/><g class="icf"><circle cx="165.2" cy="68" r="2.4"/><circle cx="165.2" cy="74" r="2.4"/><circle cx="165.2" cy="80.5" r="2.4"/></g>
<!-- group button icons -->
<use href="#brush" x="96.4" y="95.5" width="36" height="36"/>
<use href="#flatbrush" x="233.8" y="95.2" width="37" height="37"/>
<use href="#ibrush" x="370.4" y="94" width="37" height="37"/>
<use href="#ibrush" x="96.4" y="146" width="37" height="37"/>
<use href="#ibrush" x="233.8" y="146" width="37" height="37"/>
<!-- brush pen stroke -->
<path fill="#fff" d="M129.6 220.4 C146 211.6 166 202.6 184 203 C205 203.6 226 217.4 250 222.6 C268 226 284 222 294.6 219 C284 226 268 233.6 248 233 C222 232 205 217.6 183 213 C165 210 148 214 129.6 220.4Z"/>
<!-- dry ink stroke -->
<g filter="url(#rough)"><path fill="#ececec" d="M131 291.6 C148 284.6 164 280 178 279.2 C190 278.8 202 281.4 214 284.8 C228 289.4 242 296.4 256 298.4 C270 299.8 284 295.4 295.6 290.8 C284 297.4 270 302.4 255 301.8 C240 300.8 228 298.4 216 295 C204 291 192 284 178 282 C164 281.6 148 286 131 291.6Z" opacity=".88"/></g>
<!-- watery ink stroke -->
<g filter="url(#blur2)" opacity=".62"><path fill="#d8d8d8" d="M162 351 C180 350.6 200 353 218 358 C236 363 252 368.6 264 371 C248 372.6 226 370.6 208 365.6 C190 360.6 174 355 162 351Z" filter="url(#rough)"/></g>
<path filter="url(#blur1)" fill="#f2f2f2" d="M200 356.8 C210 357.4 222 360.8 232 365 C224 366 212 364 200 356.8Z" opacity=".6"/>
<!-- wet blotting ink stroke -->
<g filter="url(#blur1)"><path fill="url(#wetg)" d="M134 411.6 L268 411.2 L278 418.6 L311.4 425.6 L304 449 L290 455.4 L164 457.2 L117.6 442.8 L122 431 Z"/></g>
<!-- sub tool footer icons -->
<g class="ic" style="stroke-width:2.2"><rect x="390.4" y="896.6" width="23.4" height="21.4" rx="3"/><path d="M402 893 V909 M396.4 904.4 L402 910 L407.6 904.4"/>
<path d="M434.2 892.6 H446.2 Q449.6 892.8 449.6 896 V897.4 M429.2 909.4 V896 Q429.4 892.8 432.6 892.6 H436"/><path d="M432.4 913 Q429.4 912.8 429.2 909.6" /><rect x="434.6" y="897.8" width="20.6" height="20.2" rx="3"/><path d="M444.9 902.4 V913.4 M439.4 907.9 H450.4"/>
<path d="M469.8 896 H494 M476.6 895.6 V893.4 Q476.8 891.6 478.6 891.6 H485.2 Q487 891.8 487.2 893.6 V895.6 M472.2 896.4 L473.6 915.4 Q474 918 476.6 918.2 H487.4 Q490 918 490.4 915.4 L491.8 896.4 M478.2 900.4 V913.6 M482 900.4 V913.6 M485.8 900.4 V913.6"/></g>
<!-- tool property header icon -->
<path class="ic" style="stroke-width:6.4" d="M163.6 943.6 L148.4 958.8"/><path class="icf" d="M138.2 967.6 L140.6 961.6 L144.4 965.4Z M141.6 960.4 L145.6 964.4 L147.4 962.6 L143.4 958.6Z"/>
<circle class="ic" style="stroke-width:2.2" cx="159.4" cy="962.2" r="4.8"/><path class="ic" style="stroke-width:2.4" d="M159.4 953.4 V955.4 M159.4 969 V971 M150.6 962.2 H152.6 M166.2 962.2 H168.2 M153.2 956 L154.6 957.4 M164.2 967 L165.6 968.4 M153.2 968.4 L154.6 967 M164.2 957.4 L165.6 956"/>
<!-- second tab icon (dimmed) -->
<g style="opacity:.38"><path class="ic" style="stroke-width:6.4" d="M470.4 943.6 L456.4 957.6"/><path class="ic" style="stroke-width:2" d="M463.6 960.6 A4.6 4.6 0 0 1 472.8 960.6 M460 960.6 A8.2 8.2 0 0 1 476.4 960.6"/></g>
<!-- preview stroke -->
<path fill="#020000" d="M147.4 1020.6 C170 1008 204 989 236 986.8 C272 985 306 1006 338 1017 C374 1028.6 410 1021 436.6 1008.8 C414 1025 384 1040 348 1039.6 C308 1038.6 282 1015 246 1004.6 C214 996.6 180 1008 147.4 1020.6Z"/>
<!-- lock -->
<path class="ic" style="stroke-width:2.6" d="M465.8 1027.4 V1023 Q466 1018.8 470.2 1018.6 Q474.2 1018.8 474.6 1022.4 V1026"/><rect class="icf" x="470.4" y="1027" width="16" height="11.8" rx="2"/>
<!-- property buttons icons -->
<g class="ic" style="stroke-width:2.4;stroke:#b8b8b8"><path d="M446.2 1077.4 L452.2 1082.8 L462 1073.4 M446.2 1086.8 L452.2 1092.2 L462 1082.8"/>
<path d="M446.2 1217.4 L452.2 1222.8 L462 1213.4 M446.2 1226.8 L452.2 1232.2 L462 1222.8"/>
<rect x="446.6" y="1145.6" width="15" height="15" rx="3.2"/><path d="M448.4 1158.8 L459.8 1147.4"/>
<path d="M450.8 1350.4 L459.2 1358.8 L450.8 1367.2" style="stroke:#c8c8c8;stroke-width:2"/></g>
<!-- spinners -->
<g class="ic" style="stroke-width:1.7;stroke:#cfcfcf"><path d="M416.4 1079.7 L424.1 1072.5 L431.8 1079.7 M416.4 1089.9 L424.1 1097.3 L431.8 1089.9"/><path d="M416.4 1149.7 L424.1 1142.5 L431.8 1149.7 M416.4 1159.9 L424.1 1167.3 L431.8 1159.9"/><path d="M416.4 1219.7 L424.1 1212.5 L431.8 1219.7 M416.4 1229.9 L424.1 1237.3 L431.8 1229.9"/><path d="M416.4 1289.7 L424.1 1282.5 L431.8 1289.7 M416.4 1299.9 L424.1 1307.3 L431.8 1299.9"/></g>
<!-- property footer icons -->
<g class="ic" style="stroke-width:2.2"><path d="M441.4 1527.6 V1540.6 M441.4 1527.6 A13.4 13.4 0 1 1 430 1533.8" /><path d="M437.6 1528.2 L437.7 1528.2 M433.8 1530 L433.9 1530.1 M431 1533 L431.1 1533.1" style="stroke-width:2.4;stroke-dasharray:.1 3.4"/></g><circle class="icf" cx="441.4" cy="1541" r="3.6"/>
<path class="ic" style="stroke-width:2.2" d="M473.2 1529.4 L479.4 1533.6 V1539 L475.2 1541.4 L469.2 1536.6 C468 1539 468.6 1542.6 471.2 1545.2 C473.6 1547.4 477 1547.6 479.4 1546.4 L488.8 1554.8 Q491.6 1556.8 494.4 1554.2 Q497 1551.6 495.6 1550.4 L486 1541.6 C487.6 1539 487.6 1535.6 486 1532.6 C484 1528.8 478.6 1526.2 473.2 1529.4Z"/>
</svg>
<!-- brush preview label -->
<div class="a" style="left:90px;top:977px;width:116px;height:32px;border-radius:5px;background:rgba(70,70,70,.5)"></div>
<div class="t" style="left:90.4px;top:981.4px;font-size:21.3px;color:#ececec">Brush pen</div>
<!-- ===== colour wheel panel ===== -->
<div class="a" style="left:182px;top:1571px;width:58px;height:27px;background:#4a4a4a;border:1.5px solid #383838;border-bottom:0"></div>
<div class="a" style="left:242px;top:1571px;width:58px;height:27px;background:#4a4a4a;border:1.5px solid #383838;border-bottom:0"></div>
<div class="a" style="left:302px;top:1571px;width:58px;height:27px;background:#4a4a4a;border:1.5px solid #383838;border-bottom:0"></div>
<div class="a" style="left:362px;top:1571px;width:58px;height:27px;background:#4a4a4a;border:1.5px solid #383838;border-bottom:0"></div>
<div class="a" style="left:422px;top:1571px;width:56px;height:27px;background:#4a4a4a;border:1.5px solid #383838;border-bottom:0"></div>
<div class="a" style="left:478px;top:1569.5px;width:24px;height:28px;background:#696969;border:1.8px solid #9c9c9c;border-radius:2.5px"></div>
<svg style="left:124px;top:1570px" width="380" height="40" viewBox="124 1570 380 40">
<circle class="ic" style="stroke-width:2.2;stroke:#c6c6c6" cx="151.8" cy="1590.6" r="13"/><rect x="145.6" y="1584.4" width="12.4" height="12.4" rx="2.6" fill="#c6c6c6"/>
<clipPath id="tabclip"><rect x="182" y="1572" width="300" height="25.4"/></clipPath>
<linearGradient id="tg1" x1="0" x2="1" y1="0" y2="0"><stop offset="0" stop-color="#a8a8a8"/><stop offset="1" stop-color="#5a5a5a"/></linearGradient>
<linearGradient id="tg2" x1="0" x2="1" y1="1" y2="0"><stop offset="0" stop-color="#9a9a9a"/><stop offset="1" stop-color="#4a4a4a"/></linearGradient>
<g clip-path="url(#tabclip)" style="opacity:.62">
<rect x="199" y="1578.2" width="26.4" height="24" rx="4" fill="#8a8a8a" stroke="#b0b0b0" stroke-width="1.6"/><path d="M199 1588.4 H225.4 M208.6 1578.4 V1600 M216.8 1578.4 V1588.4" stroke="#b0b0b0" stroke-width="1.4" fill="none"/><rect x="200" y="1579.2" width="8" height="8.6" fill="#585858"/><rect x="217.4" y="1579.2" width="7.4" height="8.6" fill="#7a7a7a"/><rect x="209.6" y="1589.4" width="6.8" height="6.8" fill="none" stroke="#c4c4c4" stroke-width="1.4"/>
<rect x="259" y="1578.4" width="26.4" height="5.6" rx="2.8" fill="url(#tg1)" stroke="#b4b4b4" stroke-width="1.6"/><rect x="259" y="1588.4" width="26.4" height="5.6" rx="2.8" fill="url(#tg1)" stroke="#b4b4b4" stroke-width="1.6"/><path d="M262.6 1586 L265.6 1581.6 L268.6 1586Z M262.6 1596 L265.6 1591.6 L268.6 1596Z" fill="#c0c0c0"/>
<path d="M318.6 1602 C318.6 1593 323 1587 326 1579.6 L332 1587.4 L338 1579.6 C341 1587 345.4 1593 345.4 1602Z" fill="#7c7c7c" stroke="#a8a8a8" stroke-width="1.6" stroke-linejoin="round"/>
<rect x="378.6" y="1577.6" width="27" height="24" rx="3" fill="#9a9a9a"/><rect x="384.6" y="1580.4" width="15" height="10" fill="#6e6e6e"/><g fill="#585858"><rect x="380.2" y="1580.4" width="2.6" height="2.6"/><rect x="380.2" y="1586.4" width="2.6" height="2.6"/><rect x="380.2" y="1592.4" width="2.6" height="2.6"/><rect x="401.4" y="1580.4" width="2.6" height="2.6"/><rect x="401.4" y="1586.4" width="2.6" height="2.6"/><rect x="401.4" y="1592.4" width="2.6" height="2.6"/><rect x="384.6" y="1593.4" width="15" height="6"/></g>
<path d="M439 1602 V1586.8 Q439.2 1584.4 441.6 1584.2 H443" fill="none" stroke="#b0b0b0" stroke-width="1.8"/><rect x="443.6" y="1578.4" width="21.6" height="26" rx="3" fill="url(#tg2)" stroke="#b0b0b0" stroke-width="1.8"/><path d="M443.6 1583.6 H465.2" stroke="#b0b0b0" stroke-width="1.6"/>
</g>
<path class="ic" style="stroke-width:1.8;stroke:#cfcfcf" d="M484.4 1580.6 L490 1585.8 L495.6 1580.6"/>
</svg>
<div class="a" style="left:107.2px;top:1611.2px;width:373px;height:373px;border-radius:50%;background:conic-gradient(from -60deg,#f40000,#f62000 12deg,#f87c00 30deg,#f0f000 60deg,#7cf400 90deg,#10f000 112deg,#00f000 125deg,#00f000 145deg,#00f47c 165deg,#00f0f0 183deg,#007cff 210deg,#1400ff 240deg,#7c00ff 270deg,#f400f8 300deg,#ff007c 330deg,#f80020 350deg,#f40000);box-shadow:0 0 0 1.5px #333"></div>
<div class="a" style="left:138.2px;top:1642.2px;width:311px;height:311px;border-radius:50%;background:#505050;box-shadow:0 0 0 1.5px #333"></div>
<div class="a" style="left:192px;top:1696px;width:204px;height:203px;background:#2e2e2e"></div>
<div class="a" style="left:193px;top:1697px;width:202px;height:201px;background:linear-gradient(0deg,#000,rgba(0,0,0,0)),linear-gradient(90deg,#fff,#ff2a2a 70%,#f00 82%,#f00)"></div>
<div class="a" style="left:128.6px;top:1703.7px;width:34px;height:17px;transform:rotate(30deg);background:#f00000;border:2.6px solid #fff;box-shadow:0 0 0 1.6px #111"></div>
<div class="a" style="left:184px;top:1890px;width:18px;height:18px;border-radius:50%;border:2.6px solid #fff;box-shadow:0 0 0 1.2px #222,inset 0 0 0 1.2px #222"></div>
<!-- swatches -->
<div class="a" style="left:112.5px;top:1939px;width:47px;height:47px;border:2px solid #707070;border-radius:8px"></div>
<div class="a" style="left:119px;top:1946px;width:34px;height:34px;background:#fff"></div>
<div class="a" style="left:86px;top:1917.5px;width:48px;height:47px;border:5.5px solid #7191d1;border-radius:9px;background:#3a3a3a"></div>
<div class="a" style="left:92.5px;top:1924px;width:35px;height:34px;background:#000;border-radius:2px"></div>
<div class="a" style="left:86px;top:1989px;width:73.5px;height:25.5px;border:2px solid #707070;border-radius:8px"></div>
<div class="a" style="left:93px;top:1996px;width:60px;height:12px;border-radius:3px;background:#fff conic-gradient(#8c8c8c 25%,#fff 0 50%,#8c8c8c 0 75%,#fff 0) 0 0/12px 12px"></div>
<!-- HSV -->
<div class="a" style="left:255.5px;top:1994px;width:16.5px;height:14.5px;background:#a2a2a2;border-radius:2px"></div><div class="t" style="left:258.2px;top:1994.6px;font-size:14.5px;font-weight:bold;color:#4a4a4a">H</div>
<div class="a" style="left:320px;top:1994px;width:16.5px;height:14.5px;background:#a2a2a2;border-radius:2px"></div><div class="t" style="left:323.2px;top:1994.6px;font-size:14.5px;font-weight:bold;color:#4a4a4a">S</div>
<div class="a" style="left:383.5px;top:1994px;width:16.5px;height:14.5px;background:#a2a2a2;border-radius:2px"></div><div class="t" style="left:386.7px;top:1994.6px;font-size:14.5px;font-weight:bold;color:#4a4a4a">V</div>
<div class="t" style="left:294px;top:1991.4px;font-size:21px;color:#dcdcdc">0</div>
<div class="t" style="left:358px;top:1991.4px;font-size:21px;color:#dcdcdc">0</div>
<div class="t" style="left:422px;top:1991.4px;font-size:21px;color:#dcdcdc">0</div>
<svg style="left:460px;top:1979px" width="32" height="32" viewBox="0 0 32 32"><circle class="ic" style="stroke:#9c9c9c;stroke-width:2.2" cx="15.8" cy="15.8" r="14"/><path class="ic" style="stroke:#9c9c9c;stroke-width:2.2" d="M10.6 7.4 L25 15.8 L10.6 24.2Z"/></svg>
<!-- ===== macOS open dialog ===== -->
<div class="a" style="left:992px;top:285px;width:1600px;height:896px;border-radius:26px;background:#fff;box-shadow:0 0 0 1px rgba(0,0,0,.26),0 44px 72px -8px rgba(0,0,0,.33),0 22px 110px rgba(0,0,0,.18);overflow:hidden">
 <div class="a" style="left:0;top:0;width:257.5px;height:896px;background:linear-gradient(#dbdbdb 0,#dcdcdb 90px,#e9e8e7 230px,#eae9e8);border-right:1.5px solid #d4d3d2"></div>
 <div class="a" style="left:258px;top:124px;width:1342px;height:2px;background:#e6e6e6"></div>
 <div class="a" style="left:258px;top:188.5px;width:1342px;height:2px;background:#e6e6e6"></div>
 <div class="a" style="left:1581px;top:773.5px;width:19px;height:1.5px;background:#dcdcdc"></div>
</div>
<!-- sidebar text -->
<div class="sbh" style="top:322px;font-size:22px">Favorites</div>
<div class="sbi" style="top:365.5px;letter-spacing:.58px">Recents</div>
<div class="sbi" style="top:421.3px;letter-spacing:.72px">Applicati...</div>
<div class="sbi" style="top:477.3px;letter-spacing:.87px">Downloads</div>
<div class="sbh" style="top:554.3px;font-size:22px">iCloud</div>
<div class="sbi" style="top:597.8px;letter-spacing:.49px">iCloud Dri...</div>
<div class="sbi" style="top:653.5px;letter-spacing:1.04px">Desktop</div>
<div class="sbi" style="top:709.1px;letter-spacing:1.03px">Documents</div>
<div class="sbi" style="top:764.8px;letter-spacing:.4px">Shared</div>
<div class="sbh" style="top:842.1px;font-size:22px">Locations</div>
<div class="sbi" style="top:884.8px;letter-spacing:.49px">MacBook...</div>
<div class="sbh" style="top:961.9px;font-size:22px">Tags</div>
<!-- sidebar icons -->
<svg style="left:1020px;top:360px" width="50" height="560" viewBox="1020 360 50 560">
<g fill="none" stroke="#0a6cf0" stroke-width="2.6" stroke-linecap="round" stroke-linejoin="round">
<circle cx="1043.9" cy="377.9" r="11.8"/><path d="M1043.9 369.8 V378.4 H1036.8" style="stroke-width:2.4"/>
<path d="M1047 423 L1036.2 438.2 M1034.6 441.4 L1032.8 444.4 M1040.6 423 L1043 426.6 M1045.6 431 L1054.4 445 M1030.8 438.4 H1045 M1050.2 438.4 H1056.6" style="stroke-width:3"/>
<circle cx="1044.1" cy="489.9" r="11.8"/><path d="M1044.1 483.2 V496 M1039.4 491.6 L1044.1 496.4 L1048.8 491.6" style="stroke-width:2.4"/>
</g>
<g fill="none" stroke="#1ea3bf" stroke-width="2.4" stroke-linecap="round" stroke-linejoin="round">
<path d="M1035.8 619.2 H1052.4 C1056.4 619.2 1059 616.2 1059 612.6 C1059 609 1056.2 606.2 1052.8 606 C1052 601.8 1048.4 599.4 1044.6 599.4 C1041 599.4 1038 601.6 1036.8 605.2 C1032.4 605.2 1029 608.2 1029 612.2 C1029 616.2 1032 619.2 1035.8 619.2Z"/>
<rect x="1030" y="655.8" width="28" height="21.2" rx="3.2"/><path d="M1030 659.6 H1058"/><rect x="1034.8" y="669.6" width="18.6" height="3.8" rx="1" fill="#1ea3bf" stroke="none"/>
<path d="M1036.8 710 H1046.2 L1053 716.8 V731.6 Q1052.8 734.2 1050.2 734.4 H1036.8 Q1034.2 734.2 1034 731.6 V712.8 Q1034.2 710.2 1036.8 710Z M1046.2 710.4 V714.6 Q1046.4 716.6 1048.4 716.8 H1052.6"/>
<path d="M1047 772.6 H1041 L1038.4 768.8 Q1037.6 767.8 1036.4 767.8 H1031 Q1028.4 768 1028.2 770.6 V785 Q1028.4 787.6 1031 787.8 H1052.4 Q1055 787.6 1055.2 785 V780.4 M1028.4 773 H1047"/>
<circle cx="1054.6" cy="771.2" r="6.2" fill="#1ea3bf" stroke="none"/></g>
<circle cx="1054.6" cy="769.4" r="1.9" fill="#eae9e8"/><path d="M1051 775 Q1054.6 770 1058.2 775Z" fill="#eae9e8"/>
<rect x="1030.4" y="888.4" width="26.4" height="16" rx="1.6" fill="#c6c6c6" stroke="#8a8a8a" stroke-width="2"/><path d="M1025 906.6 H1061.4" stroke="#7c7c7c" stroke-width="3" stroke-linecap="round"/>
</svg>
<!-- toolbar -->
<div class="mbtn" style="left:1289.5px;top:327px;width:46px;height:40px"></div>
<div class="mbtn" style="left:1338px;top:327px;width:46px;height:40px"></div>
<div class="mbtn" style="left:1399.5px;top:327px;width:92px;height:40px"></div>
<div class="mbtn" style="left:1507.5px;top:327px;width:91px;height:40px"></div>
<div class="mbtn" style="left:1714px;top:327px;width:414.5px;height:40px"></div>
<div class="mbtn" style="left:2246px;top:327px;width:304px;height:40px"></div>
<svg style="left:1290px;top:327px" width="1270" height="42" viewBox="1290 327 1270 42">
<g fill="none" stroke-linecap="round" stroke-linejoin="round">
<path d="M1317.4 336 L1306.4 346.8 L1317.4 357.6" stroke="#262626" stroke-width="2.8"/>
<path d="M1356.6 336 L1367.6 346.8 L1356.6 357.6" stroke="#b4b4b4" stroke-width="2.8"/>
<g stroke="#262626" stroke-width="2"><rect x="1423" y="336.4" width="8.6" height="8.6" rx="1.6"/><rect x="1435.4" y="336.4" width="8.6" height="8.6" rx="1.6"/><rect x="1423" y="348.6" width="8.6" height="8.6" rx="1.6"/><rect x="1435.4" y="348.6" width="8.6" height="8.6" rx="1.6"/>
<path d="M1527.4 334.6 H1553.6 M1527.4 349.4 H1553.6"/><rect x="1528" y="339" width="5.6" height="5.6" rx="1"/><rect x="1537.7" y="339" width="5.6" height="5.6" rx="1"/><rect x="1547.4" y="339" width="5.6" height="5.6" rx="1"/><rect x="1528" y="353.4" width="5.6" height="5.6" rx="1"/><rect x="1537.7" y="353.4" width="5.6" height="5.6" rx="1"/><rect x="1547.4" y="353.4" width="5.6" height="5.6" rx="1"/></g>
<path d="M1465.6 344.6 L1472 351 L1478.4 344.6 M1571.6 344.6 L1578 351 L1584.4 344.6" stroke="#262626" stroke-width="3.2"/>
<circle cx="2269.6" cy="343.8" r="8.4" stroke="#262626" stroke-width="2.6"/><path d="M2275.8 350 L2283.6 357.8" stroke="#262626" stroke-width="3"/>
</g>
<!-- folder -->
<path d="M1731.4 338.6 Q1731.4 334.2 1735.6 334.2 H1742.6 Q1744.6 334.2 1745.8 335.6 L1747.4 337.4 H1756 Q1760 337.4 1760 341.4 V345 H1731.4Z" fill="#2f9cea"/>
<path d="M1731.4 342.4 Q1731.4 340 1733.8 340 H1757.6 Q1760 340 1760 342.4 V357 Q1760 360.4 1756.6 360.4 H1734.8 Q1731.4 360.4 1731.4 357Z" fill="#6cc3f7"/>
<path d="M1731.4 356.6 H1760 V357 Q1760 360.4 1756.6 360.4 H1734.8 Q1731.4 360.4 1731.4 357Z" fill="#4aa5e6"/>
<defs><linearGradient id="stp" x1="0" x2="0" y1="0" y2="1"><stop offset="0" stop-color="#3a95fc"/><stop offset="1" stop-color="#0c6df0"/></linearGradient></defs>
<rect x="2092" y="331" width="32.4" height="32" rx="7.6" fill="url(#stp)"/>
<path d="M2102.6 343 L2108.2 337.6 L2113.8 343 M2102.6 351.4 L2108.2 356.8 L2113.8 351.4" fill="none" stroke="#fff" stroke-width="2.8" stroke-linecap="round" stroke-linejoin="round"/>
</svg>
<div class="t" style="left:1770.6px;top:334.6px;font-size:24px;color:#222;letter-spacing:1.7px;font-family:'Liberation Sans','Noto Sans CJK SC',sans-serif">Фотошоп</div>
<div class="t" style="left:2300.4px;top:335.8px;font-size:25px;color:#bdbdbd;letter-spacing:.63px">Search</div>
<!-- file item -->
<div class="a" style="left:1283.8px;top:483px;width:143.8px;height:143px;border-radius:11px;background:#e9e9e9"></div>
<svg style="left:1300px;top:486px" width="112" height="134" viewBox="1300 486 112 134">
<defs><linearGradient id="fold" x1="0" x2="1" y1="1" y2="0"><stop offset="0" stop-color="#fdfdfd"/><stop offset=".5" stop-color="#ececec"/><stop offset="1" stop-color="#d6d6d6"/></linearGradient>
<filter id="dsh" x="-10%" y="-10%" width="120%" height="125%"><feGaussianBlur stdDeviation="1.6"/></filter></defs>
<path d="M1312.6 494.4 H1354 C1360 494.6 1364 497 1368 501 L1394 525 C1398 529 1400.8 533 1400.8 539 V610.4 H1310.6 V496.2Z" fill="#000" opacity=".3" filter="url(#dsh)" transform="translate(0,1.4)"/>
<path d="M1312.6 493.4 H1354 C1360 493.6 1364 496 1368 500 L1394 524 C1398 528 1400.8 532 1400.8 538 V609.6 Q1400.8 611 1399.4 611 H1311.8 Q1310.4 611 1310.4 609.6 V495.6 Q1310.4 493.4 1312.6 493.4Z" fill="#fff" stroke="#e0e0e0" stroke-width="1"/>
<path d="M1357 494.2 C1364 498 1368.4 505 1369 515 C1369.4 520 1372 522.4 1376 522.6 C1386 523 1394 526 1400 534 C1399.4 530 1397 527 1394 524 L1368 500 C1364.6 496.6 1361 494.8 1357 494.2Z" fill="#000" opacity=".16" filter="url(#dsh)" transform="translate(-1,2)"/>
<path d="M1357 494 C1364 497.8 1368.4 504.6 1369 514.6 C1369.4 519.4 1372 521.6 1376 521.8 C1386 522.2 1394 525 1400 533 C1399.4 529.6 1397 526.8 1394 524 L1368 500 C1364.6 496.6 1361 494.6 1357 494Z" fill="url(#fold)" stroke="#dcdcdc" stroke-width=".8"/>
</svg>
<div class="a" style="left:1295.5px;top:631px;width:118.5px;height:33px;border-radius:7px 7px 0 0;background:#0b60d6"></div>
<div class="a" style="left:1256px;top:663px;width:197.5px;height:33.6px;border-radius:7px;background:#0b60d6"></div>
<svg style="left:1288px;top:655px" width="134" height="10" viewBox="1288 655 134 10"><path d="M1288.5 663.6 Q1295.6 663.4 1295.6 656 V664 H1288.5Z M1421 663.6 Q1413.9 663.4 1413.9 656 V664 H1421Z" fill="#0b60d6"/></svg>
<div class="t" style="left:1295.5px;width:118.5px;text-align:center;top:638.4px;font-size:23px;font-weight:bold;color:#fff">Braids by</div>
<div class="t" style="left:1256px;width:197.5px;text-align:center;top:668.6px;font-size:23px;font-weight:bold;color:#fff">KsTumanova.abr</div>
<!-- buttons -->
<div class="mbtn" style="left:2247.5px;top:1100.5px;width:142.5px;height:40.4px;border-color:#dadada;box-shadow:0 1.5px 3px rgba(0,0,0,.22)"></div>
<div class="t" style="left:2247.5px;width:142.5px;text-align:center;top:1107.6px;font-size:25px;color:#222;letter-spacing:.7px">Cancel</div>
<div class="a" style="left:2408px;top:1101px;width:143.5px;height:39.6px;border-radius:10.5px;background:linear-gradient(#3394ff,#0a6ff2);box-shadow:0 1px 2px rgba(0,60,160,.3)"></div>
<div class="t" style="left:2408px;width:143.5px;text-align:center;top:1108.2px;font-size:24.6px;font-weight:bold;color:#fff;letter-spacing:.2px">Open</div>
<!-- red annotations -->
<svg style="left:1220px;top:460px" width="1380" height="750" viewBox="1220 460 1380 750">
<g fill="none" stroke="#f40000" stroke-width="6.4" stroke-linecap="round" stroke-linejoin="round">
<path d="M1240.0 557.5 C1239.6 554.6 1236.0 546.2 1237.5 540.0 C1239.0 533.8 1243.8 526.7 1248.8 520.0 C1253.8 513.3 1259.4 505.8 1267.5 500.0 C1275.6 494.2 1287.1 489.4 1297.5 485.0 C1307.9 480.6 1318.3 475.1 1330.0 473.5 C1341.7 471.9 1355.0 473.2 1367.5 475.5 C1380.0 477.8 1392.5 480.9 1405.0 487.5 C1417.5 494.1 1432.1 503.3 1442.5 515.0 C1452.9 526.7 1460.4 542.1 1467.5 557.5 C1474.6 572.9 1480.4 592.9 1485.0 607.5 C1489.6 622.1 1493.8 635.4 1495.0 645.0 C1496.2 654.6 1495.8 656.2 1492.5 665.0 C1489.2 673.8 1483.3 688.3 1475.0 697.5 C1466.7 706.7 1456.7 714.0 1442.5 720.0 C1428.3 726.0 1406.7 733.1 1390.0 733.5 C1373.3 733.9 1357.5 727.7 1342.5 722.5 C1327.5 717.3 1312.5 709.2 1300.0 702.5 C1287.5 695.8 1275.4 690.8 1267.5 682.5 C1259.6 674.2 1256.9 662.9 1252.5 652.5 C1248.1 642.1 1242.7 631.7 1241.0 620.0 C1239.3 608.3 1241.2 595.0 1242.5 582.5 C1243.8 570.0 1245.8 555.4 1248.8 545.0 C1251.7 534.6 1254.8 528.3 1260.0 520.0 C1265.2 511.7 1273.3 501.0 1280.0 495.0 C1286.7 489.0 1296.7 485.8 1300.0 484.0"/>
<path d="M2417.5 1095.5 C2416.8 1094.1 2412.9 1090.2 2413.5 1087.0 C2414.1 1083.8 2417.1 1080.2 2421.0 1076.0 C2424.9 1071.8 2432.7 1065.2 2437.0 1062.0 C2441.3 1058.8 2443.8 1056.9 2447.0 1056.5 C2450.2 1056.1 2451.3 1058.8 2456.0 1059.5 C2460.7 1060.2 2463.5 1059.6 2475.0 1060.5 C2486.5 1061.4 2511.7 1060.9 2525.0 1065.0 C2538.3 1069.1 2547.1 1076.2 2555.0 1085.0 C2562.9 1093.8 2570.8 1106.7 2572.5 1117.5 C2574.2 1128.3 2568.8 1141.7 2565.0 1150.0 C2561.2 1158.3 2558.3 1161.7 2550.0 1167.5 C2541.7 1173.3 2527.5 1180.9 2515.0 1185.0 C2502.5 1189.1 2487.5 1192.0 2475.0 1192.0 C2462.5 1192.0 2450.4 1189.1 2440.0 1185.0 C2429.6 1180.9 2420.3 1173.7 2412.5 1167.5 C2404.7 1161.3 2397.2 1154.2 2393.0 1148.0 C2388.8 1141.8 2387.7 1137.2 2387.5 1130.0 C2387.3 1122.8 2389.9 1111.2 2392.0 1105.0 C2394.1 1098.8 2394.5 1098.2 2400.0 1092.5 C2405.5 1086.8 2415.8 1076.2 2425.0 1071.0 C2434.2 1065.8 2450.0 1062.7 2455.0 1061.0"/>
</g>
<clipPath id="nofoot"><path d="M-5 -70 H60 V-6 H26.8 V2 H18.8 V-6 H-5Z"/></clipPath>
<text x="0" y="0" clip-path="url(#nofoot)" style="font-family:'Liberation Sans',sans-serif" font-size="77" fill="#f40000" transform="translate(1517.4 616.6) scale(1.05 2.08) skewX(1.5)">1</text>
<text x="0" y="0" style="font-family:'DejaVu Sans Light','DejaVu Sans',sans-serif" font-weight="200" font-size="140" fill="#f40000" stroke="#f40000" stroke-width="2.2" stroke-linejoin="round" transform="translate(2408 1019) scale(1.6 .985) skewX(-6)">2</text>
</svg>
</div></body></html>
